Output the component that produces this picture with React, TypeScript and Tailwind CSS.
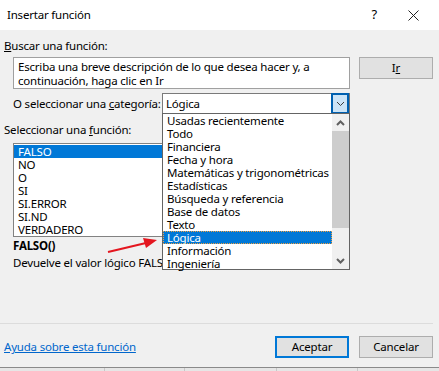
import React from 'react'

const CATEGORIES = [
  'Usadas recientemente',
  'Todo',
  'Financiera',
  'Fecha y hora',
  'Matemáticas y trigonométricas',
  'Estadísticas',
  'Búsqueda y referencia',
  'Base de datos',
  'Texto',
  'Lógica',
  'Información',
  'Ingeniería',
]

const FUNCTIONS = ['FALSO', 'NO', 'O', 'SI', 'SI.ERROR', 'SI.ND', 'VERDADERO']

function Chevron({ up = false, bold = false }: { up?: boolean; bold?: boolean }) {
  return (
    <svg width="9" height="6" viewBox="0 0 9 6" className="block">
      <polyline
        points={up ? '1,5 4.5,1.5 8,5' : '1,1 4.5,4.5 8,1'}
        fill="none"
        stroke={bold ? '#606060' : '#3c3c3c'}
        strokeWidth={bold ? 2 : 1}
      />
    </svg>
  )
}

function CategoryDropdown() {
  return (
    <div className="absolute left-[162px] top-[83px] flex h-[157px] w-[188px] border border-[#646464] bg-white">
      <div className="flex flex-1 flex-col">
        {CATEGORIES.map((name) => (
          <div
            key={name}
            className={
              name === 'Lógica'
                ? 'h-[13px] border border-dotted border-[#f0a040] bg-[#0078d7] pl-[3px] leading-[11px] text-white'
                : 'h-[13px] pl-[4px] leading-[13px] text-black'
            }
          >
            {name}
          </div>
        ))}
      </div>
      <div className="flex w-[17px] flex-col bg-[#f0f0f0]">
        <div className="flex h-[17px] items-center justify-center">
          <Chevron up bold />
        </div>
        <div className="h-[97px] bg-[#cdcdcd]" />
        <div className="flex-1" />
        <div className="flex h-[17px] items-center justify-center">
          <Chevron bold />
        </div>
      </div>
    </div>
  )
}

export default function App() {
  return (
    <div className="h-[371px] w-[439px] overflow-hidden whitespace-nowrap bg-[#f0f0f0] font-['Segoe_UI','Noto_Sans',sans-serif] text-[11.5px] tracking-[-0.2px] text-black">
      <div className="flex h-[30px] items-center bg-white pl-[7px] pr-[20px]">
        <span>Insertar función</span>
        <span className="ml-auto mr-[31px] text-[13px]">?</span>
        <svg width="11" height="11" viewBox="0 0 11 11">
          <path d="M0.5 0.5 L10.5 10.5 M10.5 0.5 L0.5 10.5" stroke="#222" strokeWidth="1" />
        </svg>
      </div>

      <div className="relative h-[337px] pt-[8px]">
        <div className="h-[15px] pl-[4px] leading-[15px]">
          <span className="underline">B</span>uscar una función:
        </div>

        <div className="mt-[4px] flex items-start pl-[13px]">
          <div className="h-[32px] w-[337px] whitespace-normal border border-[#a0a0a0] bg-white px-[4px] pt-[2px] leading-[14px]">
            Escriba una breve descripción de lo que desea hacer y, a continuación, haga clic en Ir
          </div>
          <button className="ml-[9px] flex h-[22px] w-[74px] items-center justify-center border border-[#adadad] bg-[#e1e1e1]">
            I<span className="underline">r</span>
          </button>
        </div>

        <div className="mt-[4px] flex h-[21px] items-center pl-[13px]">
          <span className="w-[149px]">
            O seleccionar una <span className="underline">c</span>ategoría:
          </span>
          <div className="flex h-[21px] w-[188px] items-center border border-[#7a7a7a] bg-white">
            <span className="flex-1 pl-[3px]">Lógica</span>
            <div className="flex h-[21px] w-[18px] items-center justify-center border-2 border-[#0060b0] bg-[#cce4f7]">
              <Chevron />
            </div>
          </div>
        </div>

        <div className="mt-[8px] h-[15px] pl-[4px] leading-[15px]">
          Seleccionar una <span className="underline">f</span>unción:
        </div>

        <div className="ml-[13px] mt-[6px] h-[94px] w-[337px] border border-[#828282] bg-white pt-[1px]">
          {FUNCTIONS.map((name) => (
            <div
              key={name}
              className={
                name === 'FALSO'
                  ? 'h-[13px] bg-[#0078d7] pl-[4px] leading-[13px] text-white'
                  : 'h-[13px] pl-[4px] leading-[13px]'
              }
            >
              {name}
            </div>
          ))}
        </div>

        <div className="mt-[1px] h-[15px] pl-[13px] font-bold leading-[15px]">FALSO()</div>
        <div className="mt-[2px] h-[15px] pl-[13px] leading-[15px]">Devuelve el valor lógico FALSO.</div>

        <div className="mt-[53px] h-px w-[433px] bg-[#dcdcdc]" />

        <div className="mt-[12px] flex h-[22px] items-center pl-[4px] pr-[6px]">
          <span className="text-[#0066cc] underline">Ayuda sobre esta función</span>
          <button className="ml-auto h-[22px] w-[74px] border-2 border-[#0078d7] bg-[#e1e1e1]">
            Aceptar
          </button>
          <button className="ml-[10px] h-[22px] w-[74px] border border-[#adadad] bg-[#e1e1e1]">
            Cancelar
          </button>
        </div>

        <CategoryDropdown />

        <svg
          className="absolute left-[106px] top-[206px]"
          width="52"
          height="18"
          viewBox="0 0 52 18"
        >
          <line x1="2" y1="16" x2="40" y2="7" stroke="#e4161f" strokeWidth="2.2" />
          <polygon points="51,4 37,2 40,12" fill="#e4161f" />
        </svg>
      </div>

      <div className="flex h-[4px] border-t border-[#8a8a8a] bg-[#e6e6e6]">
        <div className="w-[105px] border-r border-[#c8c8c8]" />
        <div className="w-[80px] border-r border-[#c8c8c8]" />
        <div className="w-[92px] border-r border-[#c8c8c8]" />
        <div className="w-[81px] border-r border-[#c8c8c8]" />
      </div>
    </div>
  )
}
